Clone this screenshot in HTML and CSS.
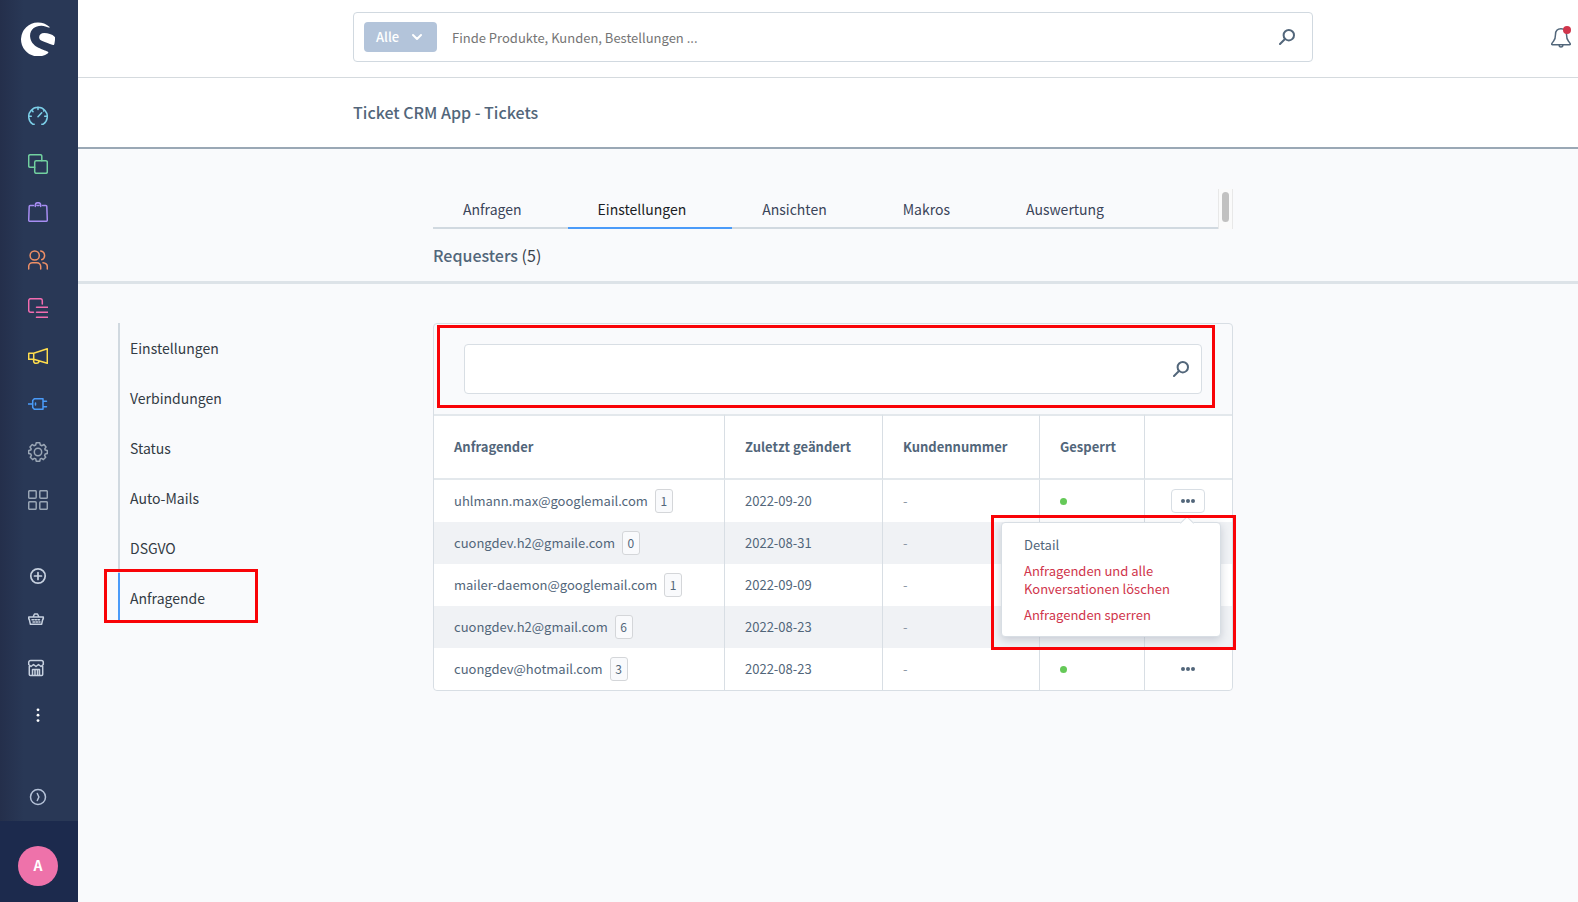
FILE: index.html
```html
<!DOCTYPE html>
<html lang="de">
<head>
<meta charset="utf-8">
<meta name="viewport" content="width=device-width, initial-scale=1">
<title>Ticket CRM App - Tickets</title>
<link rel="stylesheet" href="styles.css">
</head>
<body>
<div class="app">
  <aside class="sidebar">
    <a class="logo" href="#" aria-label="Startseite">
      <svg width="34" height="34" viewBox="0 0 34 34" fill="#fff"><path d="M28.400 4.800A17 17 0 1 0 27 31.200C28 30.400 27 29.900 25.800 29.300C21.500 27 9.800 25 9.100 14.500C8.600 7.500 14.500 3.600 20.500 3.800C23.300 3.900 25.700 4.900 27.400 5.500C28.500 5.900 29 5.300 28.400 4.800Z"/><path d="M33.900 15.100C31 12 27 11.200 23.300 11.100C19.500 11.100 17.600 13.600 18.300 16.200C19 18.800 23 19.600 26.500 20.900C29 21.800 30.800 22.700 32.200 23C33 23.200 33.300 22.400 33.500 21.200C33.900 19 34.300 15.900 33.900 15.100Z"/></svg>
    </a>
    <nav class="nav" aria-label="Hauptmenü">
      <a class="nav-item cyan" href="#" aria-label="Dashboard"><svg class="icon" viewBox="0 0 20 20"><path d="M6.200 18.200H4.700A9.300 9.300 0 1 1 15.300 18.200H13.800M10 1V3.500M1 10.300H3.300M19 10.300H16.700M3.700 4.300L5 5.600M16.300 4.300L15.600 5M10 10.800L13.700 6.800"/></svg></a>
      <a class="nav-item green" href="#" aria-label="Kataloge"><svg class="icon" viewBox="0 0 20 20"><path d="M6.700 13.300H2.200A1.500 1.500 0 0 1 .7 11.800V2.200A1.500 1.500 0 0 1 2.200.7H12.300A1.500 1.500 0 0 1 13.800 2.200V6.700"/><rect x="6.700" y="6.700" width="12.600" height="12.600" rx="1.500"/></svg></a>
      <a class="nav-item purple" href="#" aria-label="Bestellungen"><svg class="icon" viewBox="0 0 20 20"><path d="M5.500 3.500H2.200A1 1 0 0 0 1.200 4.500L.7 18A1.200 1.200 0 0 0 1.900 19.300H18.100A1.200 1.200 0 0 0 19.300 18L18.800 4.500A1 1 0 0 0 17.800 3.500H14.500M9 3.500H11M7.300 4.500V3.400A2.700 2.700 0 0 1 12.700 3.400V4.500"/></svg></a>
      <a class="nav-item orange" href="#" aria-label="Kunden"><svg class="icon" viewBox="0 0 20 20"><circle cx="6.700" cy="5.500" r="4.600"/><path d="M.7 19V16.500A3.800 3.800 0 0 1 4.500 12.700H8.900A3.800 3.800 0 0 1 12.700 16.500V19M12.700 1A4.600 4.600 0 0 1 13.700 9.800M15 12.700C17.600 13 19.300 14.300 19.300 16.500V19"/></svg></a>
      <a class="nav-item pink" href="#" aria-label="Inhalte"><svg class="icon" viewBox="0 0 20 20"><path d="M5.500 14.300H2.700A2 2 0 0 1 .7 12.300V2.700A2 2 0 0 1 2.700.7H12.300A2 2 0 0 1 14.300 2.700V6M8.500 9.300H20M8.500 14.300H20M8.500 19.300H20"/></svg></a>
      <a class="nav-item yellow" href="#" aria-label="Marketing"><svg class="icon" viewBox="0 0 20 20"><path d="M.7 7.300H5.700V13.300H.7ZM5.700 7.300L19.300 2.700V17.300L5.700 13.300M5.800 13.500C5.100 16.200 6.500 17.300 8.300 17.300C10 17.300 11 16.300 11 15"/></svg></a>
      <a class="nav-item blue" href="#" aria-label="Erweiterungen"><svg class="icon" viewBox="0 0 20 20"><path d="M.3 10H4.700M7.500 9V11M6.300 4.700H15V15.300H6.300L4.700 13.500V6.500ZM15 7.300H18.500M15 12.700H18.500"/></svg></a>
      <a class="nav-item gray" href="#" aria-label="Einstellungen"><svg class="icon" viewBox="0 0 20 20"><circle cx="10" cy="10" r="3.700"/><path d="M8.200.8H11.800L12.300 3L14 3.700L16 2.500L18 5L16.800 6.900L17.300 8.100L19.300 8.500V11.600L17.200 12L16.600 13.500L17.700 15.200L15.400 17.600L13.600 16.400L12.200 17L11.800 19.200H8.200L7.800 17L6.400 16.400L4.600 17.600L2.300 15.200L3.400 13.500L2.800 12L.7 11.600V8.500L2.700 8.100L3.200 6.900L2 5L4.300 2.500L6 3.700L7.700 3Z"/></svg></a>
      <a class="nav-item gray" href="#" aria-label="Übersicht"><svg class="icon" viewBox="0 0 20 20"><rect x=".7" y=".7" width="7.500" height="7.500" rx="1"/><rect x="11.800" y=".7" width="7.500" height="7.500" rx="1"/><rect x=".7" y="11.800" width="7.500" height="7.500" rx="1"/><rect x="11.800" y="11.800" width="7.500" height="7.500" rx="1"/></svg></a>
    </nav>
    <nav class="nav nav-extra" aria-label="Weitere Funktionen">
      <a class="nav-item short light" href="#" aria-label="Hinzufügen"><svg class="icon" viewBox="0 0 20 20"><g stroke-width="1.700"><circle cx="10" cy="10" r="7.200"/><path d="M10 6.500V13.500M6.500 10H13.500"/></g></svg></a>
      <a class="nav-item light" href="#" aria-label="Warenkorb"><svg class="icon" viewBox="0 0 20 20"><path d="M.7 7H15.300V9H14.800L13.600 14.300H2.400L1.200 9H.7ZM5 7L6.500 4H9.500L11 7"/><path stroke-dasharray="1.500 1.500" d="M4 9.700H13M5 12H12"/></svg></a>
      <a class="nav-item light" href="#" aria-label="Verkaufskanal"><svg class="icon" viewBox="0 0 20 20"><path d="M1.300 8.500V16.500A1 1 0 0 0 2.300 17.500H13.700A1 1 0 0 0 14.700 16.500V8.500M.7 4.500A2 2 0 0 1 2.700 2.500H13.300A2 2 0 0 1 15.300 4.500V6.500L13 8.500L10.500 6.500L8 8.500L5.500 6.500L3 8.500L.7 6.500ZM4.500 17V11.500H11.500V17M7 11.500V17M9.500 11.500V17"/></svg></a>
      <a class="nav-item light" href="#" aria-label="Mehr"><svg class="icon" viewBox="0 0 20 20"><g fill="#fff" stroke="none"><circle cx="10" cy="3.800" r="1.400"/><circle cx="10" cy="9.200" r="1.400"/><circle cx="10" cy="14.600" r="1.400"/></g></svg></a>
    </nav>
    <button class="expand" type="button" aria-label="Menü ausklappen"><svg class="icon" viewBox="0 0 20 20"><circle cx="10" cy="10" r="7.500"/><path d="M9.300 6.500L10.900 10L9.300 13.500"/></svg></button>
    <div class="user"><span class="avatar">A</span></div>
  </aside>

  <div class="main">
    <header class="topbar">
      <form class="search">
        <button class="scope" type="button">Alle
          <svg width="12" height="8" viewBox="0 0 12 8" fill="none" stroke="#fff" stroke-width="2" stroke-linecap="round" stroke-linejoin="round"><path d="M2 2L6 6L10 2"/></svg>
        </button>
        <input class="search-input" type="search" aria-label="Suche" placeholder="Finde Produkte, Kunden, Bestellungen ...">
        <button class="search-button" type="submit" aria-label="Suchen">
          <svg width="16" height="16" viewBox="0 0 16 16" class="lens"><circle cx="9.800" cy="6.200" r="5.200"/><path d="M6 10L1 15"/></svg>
        </button>
      </form>
      <button class="bell" type="button" aria-label="Benachrichtigungen">
        <svg width="20" height="22" viewBox="0 0 20 22" fill="none" stroke="#52667a" stroke-width="1.500" stroke-linejoin="round"><path d="M10 2.700C6 2.700 4.500 5.300 4.500 8.500C4.500 12 4 13.500 2.500 15.200C.5 17.500 .2 18.700 1.500 18.700H18.500C19.800 18.700 19.500 17.500 17.500 15.200C16 13.500 15.500 12 15.500 8.500C15.500 5.300 14 2.700 10 2.700ZM8 19.500C8.500 21.600 11.500 21.600 12 19.500"/><circle cx="16" cy="4" r="4" fill="#d0354b" stroke="none"/></svg>
      </button>
    </header>

    <div class="page-head"><h1 class="page-title">Ticket CRM App - Tickets</h1></div>

    <section class="section-head">
      <div class="tabs-row">
        <nav class="tabs" aria-label="Bereiche">
          <a class="tab" href="#">Anfragen</a>
          <a class="tab active" href="#">Einstellungen</a>
          <a class="tab" href="#">Ansichten</a>
          <a class="tab" href="#">Makros</a>
          <a class="tab" href="#">Auswertung</a>
        </nav>
        <div class="scroll-track"><div class="scroll-thumb"></div></div>
      </div>
      <h2 class="list-title">Requesters <span class="count">(5)</span></h2>
    </section>

    <div class="content">
      <nav class="side-menu" aria-label="Einstellungen">
        <a class="side-link" href="#">Einstellungen</a>
        <a class="side-link" href="#">Verbindungen</a>
        <a class="side-link" href="#">Status</a>
        <a class="side-link" href="#">Auto-Mails</a>
        <a class="side-link" href="#">DSGVO</a>
        <a class="side-link current" href="#">Anfragende<span class="mark mark-link"></span></a>
      </nav>

      <section class="card">
        <div class="card-search">
          <form class="filter">
            <input class="filter-input" type="search" aria-label="Anfragende suchen">
            <button class="search-button" type="submit" aria-label="Suchen">
              <svg width="16" height="16" viewBox="0 0 16 16" class="lens"><circle cx="9.800" cy="6.200" r="5.200"/><path d="M6 10L1 15"/></svg>
            </button>
          </form>
          <span class="mark mark-search"></span>
        </div>
        <table class="grid">
          <colgroup><col class="c-mail"><col class="c-date"><col class="c-number"><col class="c-lock"><col></colgroup>
          <thead>
            <tr><th scope="col">Anfragender</th><th scope="col">Zuletzt geändert</th><th scope="col">Kundennummer</th><th scope="col">Gesperrt</th><th aria-label="Aktionen"></th></tr>
          </thead>
          <tbody>
            <tr>
              <td>uhlmann.max@googlemail.com <span class="badge">1</span></td><td>2022-09-20</td><td class="dash">-</td><td><span class="dot"></span></td>
              <td class="actions">
                <button class="more open" type="button" aria-label="Aktionen"><span class="pip"></span><span class="pip"></span><span class="pip"></span></button>
                <div class="menu">
                  <button class="menu-item" type="button">Detail</button>
                  <button class="menu-item danger" type="button">Anfragenden und alle Konversationen löschen</button>
                  <button class="menu-item danger" type="button">Anfragenden sperren</button>
                  <span class="mark mark-menu"></span>
                </div>
              </td>
            </tr>
            <tr><td>cuongdev.h2@gmaile.com <span class="badge">0</span></td><td>2022-08-31</td><td class="dash">-</td><td><span class="dot"></span></td><td class="actions"><button class="more" type="button" aria-label="Aktionen"><span class="pip"></span><span class="pip"></span><span class="pip"></span></button></td></tr>
            <tr><td>mailer-daemon@googlemail.com <span class="badge">1</span></td><td>2022-09-09</td><td class="dash">-</td><td><span class="dot"></span></td><td class="actions"><button class="more" type="button" aria-label="Aktionen"><span class="pip"></span><span class="pip"></span><span class="pip"></span></button></td></tr>
            <tr><td>cuongdev.h2@gmail.com <span class="badge">6</span></td><td>2022-08-23</td><td class="dash">-</td><td><span class="dot"></span></td><td class="actions"><button class="more" type="button" aria-label="Aktionen"><span class="pip"></span><span class="pip"></span><span class="pip"></span></button></td></tr>
            <tr><td>cuongdev@hotmail.com <span class="badge">3</span></td><td>2022-08-23</td><td class="dash">-</td><td><span class="dot"></span></td><td class="actions"><button class="more" type="button" aria-label="Aktionen"><span class="pip"></span><span class="pip"></span><span class="pip"></span></button></td></tr>
          </tbody>
        </table>
      </section>
    </div>
  </div>
</div>
</body>
</html>
```

FILE: styles.css
```css
* { box-sizing: border-box; }

body {
  margin: 0;
  background: #f9fafc;
  color: #52667a;
  font: 400 14px/20px "Noto Sans CJK JP", "Noto Sans", sans-serif;
}

a { color: inherit; text-decoration: none; }
button, input { font: inherit; color: inherit; }
button { padding: 0; border: 0; background: none; cursor: pointer; }

.app { display: flex; min-height: 100vh; }

/* Sidebar */
.sidebar {
  display: flex;
  flex-direction: column;
  flex: none;
  width: 78px;
  background: linear-gradient(90deg, #242f4b, #293856 24px);
}
.logo { display: flex; justify-content: center; padding: 22px 2px 0 0; height: 92px; }
.nav { display: flex; flex-direction: column; }
.nav-extra { margin-top: 32px; }
.nav-item { display: flex; align-items: center; justify-content: center; height: 48px; padding-right: 2px; }
.nav-item.short { height: 40px; }
.icon { width: 20px; height: 20px; fill: none; stroke: currentColor; stroke-width: 1.5; stroke-linecap: round; stroke-linejoin: round; }
.cyan { color: #7ccfe8; }
.green { color: #72d1a0; }
.purple { color: #a78df2; }
.orange { color: #ee8f66; }
.pink { color: #f36cb0; }
.yellow { color: #ffdd4d; }
.blue { color: #4a9bf9; }
.gray { color: #9aa6b5; }
.light { color: #c6d0df; }
.expand { margin-top: auto; height: 48px; padding-right: 2px; color: #b5c2d8; }
.expand .icon { display: block; margin: 0 auto; }
.user { display: flex; align-items: center; justify-content: center; height: 81px; padding: 8px 2px 0 0; background: #1c2a4d; }
.avatar { width: 40px; height: 40px; border-radius: 50%; background: #ee72aa; color: #fff; font-weight: 700; line-height: 39px; text-align: center; }

.main { flex: 1; min-width: 0; }

/* Top bar */
.topbar {
  display: grid;
  grid-template-columns: 275fr minmax(0, 960px) 265fr;
  align-items: start;
  height: 78px;
  padding-top: 12px;
  border-bottom: 1px solid #d5dade;
  background: #fff;
}
.search { grid-column: 2; display: flex; align-items: center; height: 50px; padding: 0 17px 0 10px; border: 1px solid #d1d9e0; border-radius: 4px; }
.scope { display: flex; align-items: center; justify-content: space-between; width: 73px; height: 30px; padding: 0 14px 0 12px; border-radius: 4px; background: #b3c4da; color: #fff; font-size: 13px; font-weight: 500; }
.search-input { flex: 1; min-width: 0; height: 40px; padding: 0 15px; border: 0; outline: 0; background: none; font-size: 13px; }
.search-input::placeholder { color: #757575; opacity: 1; }
.search-button { flex: none; }
.lens { display: block; fill: none; stroke: #52667a; stroke-width: 2; stroke-linecap: round; }
.bell { justify-self: end; margin: 14px 7px 0 0; }
.bell svg { display: block; }

.page-head { display: grid; grid-template-columns: 275fr minmax(0, 960px) 265fr; height: 71px; padding-bottom: 2px; border-bottom: 2px solid #9aa8b5; background: #fff; align-items: center; }
.page-title { grid-column: 2; margin: 0; font-size: 16px; font-weight: 500; }

/* Tabs and list title */
.section-head { display: grid; grid-template-columns: 355fr minmax(0, 800px) 345fr; padding-top: 40px; height: 135px; border-bottom: 3px solid #dde3e8; align-content: start; }
.tabs-row { grid-column: 2; display: flex; }
.tabs { display: flex; flex: 1; height: 40px; border-bottom: 2px solid #d1d9e0; }
.tab { height: 40px; padding: 0 46px 0 30px; border-bottom: 2px solid transparent; color: #3a4459; line-height: 40px; }
.tab.active { border-color: #4a9bf9; color: #1a1d24; }
.scroll-track { width: 15px; padding: 3px 3px 0; border: solid #e8e8e8; border-width: 0 1px; background: #fafafa; }
.scroll-thumb { height: 30px; border-radius: 4px; background: #c1c1c1; }
.list-title { grid-column: 2; margin: 16px 0 0; font-size: 16px; font-weight: 500; }
.count { color: #3a424c; font-weight: 400; }

/* Content */
.content { display: grid; grid-template-columns: 355fr minmax(0, 800px) 345fr; align-items: start; padding: 39px 0; }
.side-menu { margin: 0 40px; }
.side-link { display: block; position: relative; padding: 0 10px; border-left: 2px solid #d1d9e0; color: #333b44; line-height: 50px; }
.side-link.current { border-color: #4a9bf9; }

.card { border: 1px solid #d8dee4; border-radius: 4px; }
.card-search { position: relative; padding: 20px 30px; }
.filter { display: flex; align-items: center; height: 50px; padding-right: 12px; border: 1px solid #d8dee4; border-radius: 4px; background: #fff; }
.filter-input { flex: 1; min-width: 0; height: 40px; padding: 0 15px; border: 0; outline: 0; background: none; }

.grid { width: 100%; table-layout: fixed; border-collapse: separate; border-spacing: 0; border-radius: 0 0 4px 4px; background: #fff; font-size: 13px; }
.c-mail { width: 291px; }
.c-date { width: 158px; }
.c-number { width: 157px; }
.c-lock { width: 105px; }
.grid th, .grid td { padding: 0 20px; border-right: 1px solid #d8dee4; text-align: left; white-space: nowrap; }
.grid th:last-child, .grid td:last-child { border-right: 0; }
.grid th { height: 66px; border: solid #e3e8ec; border-width: 2px 1px 2px 0; border-right-color: #d8dee4; font-weight: 700; }
.grid td { height: 42px; }
.grid tbody tr:nth-child(even) { background: #f0f2f5; }
.grid .dash { color: #8b96a5; }
.badge { display: inline-block; min-width: 18px; height: 24px; margin-left: 4px; padding: 0 4px; border: 1px solid #d4d6d9; border-radius: 3px; background: #f9fafc; font-size: 12px; line-height: 22px; text-align: center; }
.dot { display: block; width: 7px; height: 7px; border-radius: 50%; background: #65c958; }
.grid .actions { position: relative; padding: 0 2px 0 0; text-align: center; }
.more { display: inline-flex; align-items: center; justify-content: center; gap: 1px; width: 34px; height: 24px; border: 1px solid transparent; border-radius: 4px; vertical-align: middle; }
.more.open { border-color: #d8dee4; }
.pip { width: 4px; height: 4px; border-radius: 50%; background: #52667a; }

/* Context menu */
.menu { position: absolute; z-index: 2; top: 42px; right: 11px; display: flex; flex-direction: column; gap: 8px; width: 220px; padding: 13px 22px 12px; border: 1px solid #d8dee4; border-radius: 4px; background: #fff; box-shadow: 0 3px 8px rgba(40, 56, 86, .2); }
.menu::before { content: ""; position: absolute; top: -5px; right: 28px; width: 9px; height: 9px; border: solid #d8dee4; border-width: 1px 0 0 1px; background: #fff; transform: rotate(45deg); }
.menu-item { line-height: 18px; text-align: left; white-space: normal; }
.danger { color: #d0354b; }

/* Highlight frames */
.mark { position: absolute; border: 3px solid #f90307; pointer-events: none; }
.mark-link { top: -4px; left: -16px; width: 154px; height: 54px; }
.mark-search { inset: 1px 17px 6px 3px; }
.mark-menu { inset: -8px -16px -14px -11px; }
```
